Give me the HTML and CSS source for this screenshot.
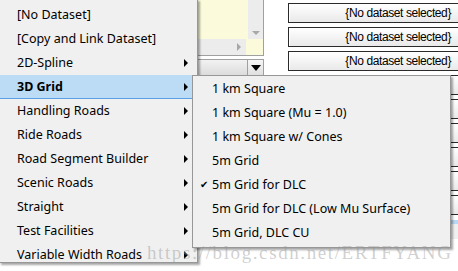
FILE: index.html
```html
<!DOCTYPE html>
<html lang="en">
<head>
    <meta charset="UTF-8">
    <title>Road Dataset Menu</title>
    <link rel="stylesheet" href="styles.css">
</head>
<body>
    <!-- Ventana de fondo -->
    <div class="app">
        <div class="hidden-col"></div>

        <div class="list-col">
            <div class="listbox">
                <div class="list-top">
                    <div class="list-area"></div>
                    <div class="vscroll"><span class="tri tri-down-gray"></span></div>
                </div>
                <div class="list-bottom">
                    <div class="hscroll"><span class="tri tri-right-gray"></span></div>
                    <div class="corner"></div>
                </div>
            </div>
            <div class="combo">
                <div class="combo-text"></div>
                <div class="combo-btn"><span class="tri tri-down"></span></div>
            </div>
        </div>

        <div class="fields">
            <div class="field">{No dataset selected}</div>
            <div class="field">{No dataset selected}</div>
            <div class="field">{No dataset selected}</div>
            <div class="field"></div>
            <div class="field"></div>
            <div class="field"></div>
            <div class="field"></div>
            <div class="field"></div>
            <div class="field"></div>
            <div class="field selected"></div>
        </div>
    </div>

    <!-- Menu contextual -->
    <div class="menu">
        <div class="item">[No Dataset]</div>
        <div class="item">[Copy and Link Dataset]</div>
        <div class="item sub">2D-Spline</div>
        <div class="item sub active">3D Grid</div>
        <div class="item sub">Handling Roads</div>
        <div class="item sub">Ride Roads</div>
        <div class="item sub">Road Segment Builder</div>
        <div class="item sub">Scenic Roads</div>
        <div class="item sub">Straight</div>
        <div class="item sub">Test Facilities</div>
        <div class="item sub">Variable Width Roads</div>
    </div>

    <!-- Submenu 3D Grid -->
    <div class="submenu">
        <div class="item">1 km Square</div>
        <div class="item">1 km Square (Mu = 1.0)</div>
        <div class="item">1 km Square w/ Cones</div>
        <div class="item">5m Grid</div>
        <div class="item checked">5m Grid for DLC</div>
        <div class="item">5m Grid for DLC (Low Mu Surface)</div>
        <div class="item">5m Grid, DLC CU</div>
    </div>

    <div class="watermark">https://blog.csdn.net/ERTFYANG</div>
</body>
</html>
```

FILE: styles.css
```css
* {
    box-sizing: border-box;
    margin: 0;
    padding: 0;
}

body {
    width: 458px;
    height: 271px;
    overflow: hidden;
    background-color: #ffffff;
    position: relative;
    font-family: 'Noto Sans', 'Open Sans', sans-serif;
}

/* Ventana de fondo */
.app {
    display: flex;
    align-items: flex-start;
}

.hidden-col {
    width: 198px;
    flex-shrink: 0;
}

.list-col {
    width: 66px;
    flex-shrink: 0;
    display: flex;
    flex-direction: column;
    gap: 3px;
}

.listbox {
    height: 56px;
    border-right: 1px solid #a0a0a0;
    border-bottom: 1px solid #a0a0a0;
    background-color: #fbfbdc;
    display: flex;
    flex-direction: column;
}

.list-top {
    flex: 1;
    display: flex;
}

.list-area {
    flex: 1;
}

.vscroll {
    width: 15px;
    background-color: #ececec;
    display: flex;
    align-items: flex-end;
    justify-content: center;
    padding-bottom: 4px;
}

.list-bottom {
    height: 16px;
    display: flex;
}

.hscroll {
    flex: 1;
    background-color: #ececec;
    display: flex;
    align-items: center;
    justify-content: flex-end;
    padding-right: 5px;
}

.corner {
    width: 17px;
}

.combo {
    height: 17px;
    display: flex;
    border: 1px solid #a0a0a0;
    border-left: none;
    background: linear-gradient(#f2f2f2, #dcdcdc);
}

.combo-text {
    flex: 1;
}

.combo-btn {
    width: 16px;
    border-left: 1px solid #a0a0a0;
    display: flex;
    align-items: center;
    justify-content: center;
    background: linear-gradient(#f6f6f6, #e0e0e0);
}

.tri {
    width: 0;
    height: 0;
    display: block;
}

.tri-down {
    border-left: 5px solid transparent;
    border-right: 5px solid transparent;
    border-top: 6px solid #000;
}

.tri-down-gray {
    border-left: 4px solid transparent;
    border-right: 4px solid transparent;
    border-top: 4px solid #a8a8a8;
}

.tri-right-gray {
    border-top: 4px solid transparent;
    border-bottom: 4px solid transparent;
    border-left: 4px solid #a8a8a8;
}

.fields {
    margin-left: 24px;
    padding-top: 3px;
    width: 170px;
    flex-shrink: 0;
    display: flex;
    flex-direction: column;
    gap: 4px;
}

.field {
    height: 20px;
    border: 1px solid #2a2a2a;
    border-right: none;
    background: linear-gradient(#ffffff, #e9e9e9);
    box-shadow: inset 1px 1px 0 #ffffff;
    font-family: 'Liberation Sans', Arial, sans-serif;
    font-size: 12px;
    letter-spacing: -0.4px;
    line-height: 18px;
    color: #000;
    text-align: right;
    padding-right: 7px;
}

.field.selected {
    border: none;
    background: linear-gradient(#b9d8f5 0 5px, #f0f0f0 5px);
}

/* Menus */
.menu,
.submenu {
    position: absolute;
    background-color: #f0f0f0;
    border: 1px solid #979797;
    box-shadow: 2px 2px 2px rgba(0, 0, 0, 0.35);
    font-size: 12.5px;
    color: #000;
}

.menu {
    left: -1px;
    top: -1px;
    width: 199px;
    height: 264px;
    padding-top: 3px;
}

.submenu {
    left: 192px;
    top: 75px;
    width: 259px;
    padding: 1px 0 2px;
}

.item {
    height: 24px;
    line-height: 23px;
    position: relative;
    white-space: nowrap;
}

.menu .item {
    padding-left: 17px;
}

.submenu .item {
    padding-left: 19px;
}

.menu .item.active {
    background-color: #bcdbf5;
    border-bottom: 1px solid #5aa0e6;
    font-weight: bold;
    margin-right: 4px;
}

.item.sub::after {
    content: '';
    position: absolute;
    right: 9px;
    top: 8px;
    border-top: 4px solid transparent;
    border-bottom: 4px solid transparent;
    border-left: 4px solid #000;
}

.menu .item.active::after {
    right: 5px;
}

.item.checked::before {
    content: '\2714';
    position: absolute;
    left: 7px;
    top: 0;
    font-size: 10px;
}

.watermark {
    position: absolute;
    left: 147px;
    top: 242px;
    font-family: 'Liberation Serif', serif;
    font-size: 19px;
    letter-spacing: 1.6px;
    color: rgba(150, 150, 150, 0.45);
    white-space: nowrap;
    pointer-events: none;
}
```
